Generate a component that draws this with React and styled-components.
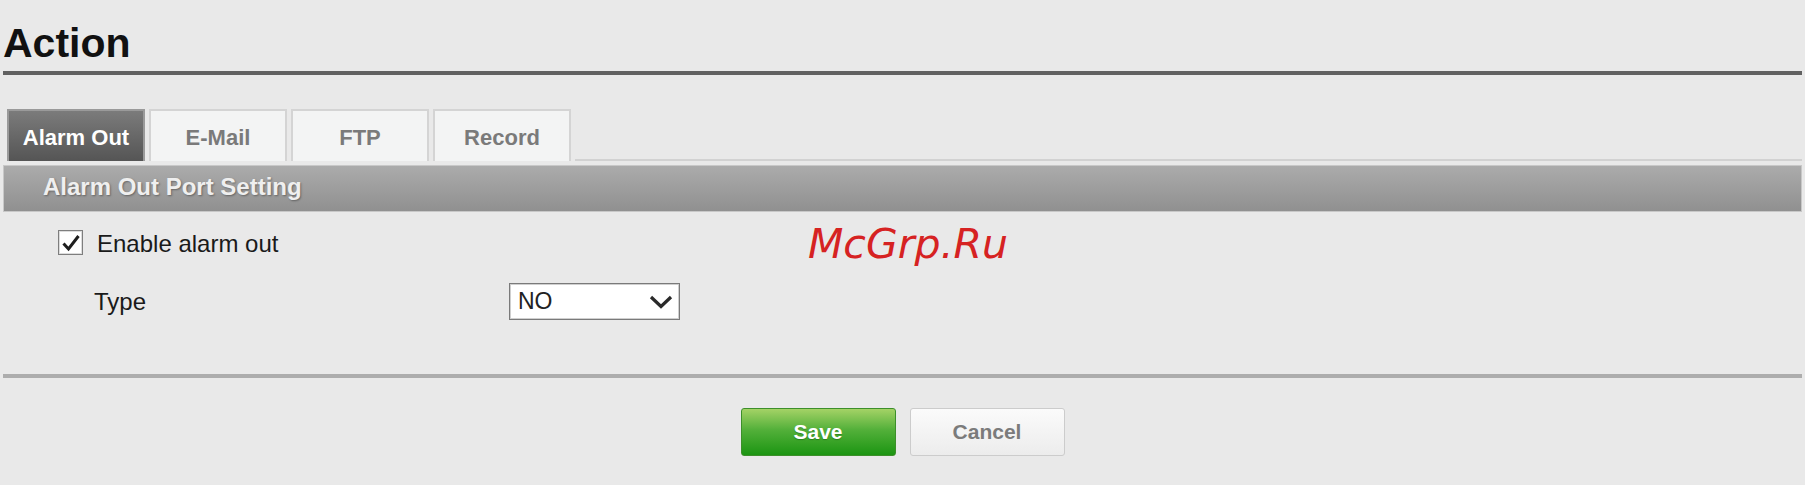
import React from "react";
import styled, { createGlobalStyle } from "styled-components";

const GlobalStyle = createGlobalStyle`
  html, body {
    margin: 0;
    padding: 0;
    background: #e9e9e9;
    font-family: "Liberation Sans", Arial, sans-serif;
  }
`;

const tabs = ["Alarm Out", "E-Mail", "FTP", "Record"];

const App = () => {
  return (
    <>
      <GlobalStyle />
      <StyledPage>
        <StyledTitle>Action</StyledTitle>
        <StyledTabBar>
          {tabs.map((tab, i) => (
            <StyledTab key={tab} $active={i === 0}>
              {tab}
            </StyledTab>
          ))}
          <StyledTabFiller />
        </StyledTabBar>
        <StyledSectionHeader>Alarm Out Port Setting</StyledSectionHeader>
        <StyledForm>
          <StyledCheckRow>
            <StyledCheckbox>
              <svg width="20" height="18" viewBox="0 0 20 18">
                <path
                  d="M2.5 9.5 L7.5 15 L17.5 2"
                  fill="none"
                  stroke="#1e1e1e"
                  strokeWidth="3"
                  strokeLinejoin="miter"
                />
              </svg>
            </StyledCheckbox>
            <StyledLabel>Enable alarm out</StyledLabel>
          </StyledCheckRow>
          <StyledFieldRow>
            <StyledFieldLabel>Type</StyledFieldLabel>
            <StyledSelect>
              <span>NO</span>
              <svg width="24" height="14" viewBox="0 0 24 14">
                <path
                  d="M2 2 L12 11.5 L22 2"
                  fill="none"
                  stroke="#2a2a2a"
                  strokeWidth="3.2"
                />
              </svg>
            </StyledSelect>
          </StyledFieldRow>
        </StyledForm>
        <StyledDivider />
        <StyledActions>
          <StyledButton $primary>Save</StyledButton>
          <StyledButton>Cancel</StyledButton>
        </StyledActions>
        <StyledWatermark>McGrp.Ru</StyledWatermark>
      </StyledPage>
    </>
  );
};

const StyledPage = styled.div`
  position: relative;
  padding: 0 3px;
  height: 485px;
  box-sizing: border-box;
`;

const StyledTitle = styled.h1`
  margin: 0;
  padding: 20px 0 5px;
  font-size: 41px;
  line-height: 46px;
  font-weight: bold;
  color: #111;
  border-bottom: 4px solid #616161;
`;

const StyledTabBar = styled.div`
  display: flex;
  align-items: flex-end;
  gap: 4px;
  margin-top: 34px;
  padding-left: 4px;
`;

const StyledTab = styled.div`
  width: 138px;
  height: 52px;
  box-sizing: border-box;
  display: flex;
  align-items: center;
  justify-content: center;
  padding-top: 4px;
  font-size: 22px;
  font-weight: bold;
  color: ${(p) => (p.$active ? "#ffffff" : "#7a7a7a")};
  background: ${(p) =>
    p.$active
      ? "linear-gradient(to bottom, #7b7b7b 0%, #555555 100%)"
      : "#f3f4f4"};
  border: 2px solid ${(p) => (p.$active ? "#9a9a9a" : "#d4d4d4")};
  border-bottom: none;
`;

const StyledTabFiller = styled.div`
  flex: 1;
  height: 2px;
  background: #d2d2d2;
`;

const StyledSectionHeader = styled.div`
  margin-top: 4px;
  height: 47px;
  box-sizing: border-box;
  display: flex;
  align-items: center;
  padding: 0 0 3px 39px;
  border: 1px solid #c8c8c8;
  background: linear-gradient(to bottom, #ababab 0%, #909090 100%);
  color: #efefef;
  font-size: 24px;
  font-weight: bold;
  text-shadow: 1px 1px 2px rgba(0, 0, 0, 0.35);
`;

const StyledForm = styled.div`
  display: flex;
  flex-direction: column;
  padding: 18px 0 0 55px;
`;

const StyledCheckRow = styled.div`
  display: flex;
  align-items: center;
  gap: 14px;
  height: 25px;
`;

const StyledCheckbox = styled.div`
  width: 25px;
  height: 25px;
  box-sizing: border-box;
  display: flex;
  align-items: center;
  justify-content: center;
  border: 1px solid #7e7e7e;
  box-shadow: inset 0 0 0 1px #dcdcdc;
  background: #fff;
`;

const StyledLabel = styled.span`
  font-size: 24px;
  color: #1a1a1a;
  padding-top: 2px;
`;

const StyledFieldRow = styled.div`
  display: flex;
  align-items: center;
  margin-top: 28px;
  padding-left: 36px;
`;

const StyledFieldLabel = styled.span`
  width: 415px;
  font-size: 24px;
  color: #1a1a1a;
`;

const StyledSelect = styled.div`
  width: 171px;
  height: 37px;
  box-sizing: border-box;
  display: flex;
  align-items: center;
  justify-content: space-between;
  padding: 0 6px 0 8px;
  background: #fff;
  border: 1px solid #7a7a7a;
  box-shadow: inset 0 0 0 1px #cfcfcf;
  font-size: 23px;
  color: #222;
`;

const StyledDivider = styled.div`
  margin-top: 54px;
  height: 4px;
  background: #adadad;
`;

const StyledActions = styled.div`
  display: flex;
  justify-content: center;
  gap: 14px;
  margin-top: 30px;
`;

const StyledButton = styled.button`
  width: 155px;
  height: 48px;
  box-sizing: border-box;
  border-radius: 3px;
  font-family: "Liberation Sans", Arial, sans-serif;
  font-size: 21px;
  font-weight: bold;
  cursor: pointer;
  color: ${(p) => (p.$primary ? "#ffffff" : "#7b7b7b")};
  border: 1px solid ${(p) => (p.$primary ? "#3c8f2a" : "#cccccc")};
  background: ${(p) =>
    p.$primary
      ? "linear-gradient(to bottom, #a4d266 0%, #53b03a 45%, #1c9512 100%)"
      : "linear-gradient(to bottom, #fbfbfb 0%, #ececec 100%)"};
  text-shadow: ${(p) =>
    p.$primary ? "0 1px 1px rgba(0, 60, 0, 0.35)" : "none"};
`;

const StyledWatermark = styled.div`
  position: absolute;
  left: 808px;
  top: 220px;
  font-family: "DejaVu Sans", sans-serif;
  font-style: oblique;
  font-size: 41px;
  color: #d62222;
  pointer-events: none;
`;

export default App;
